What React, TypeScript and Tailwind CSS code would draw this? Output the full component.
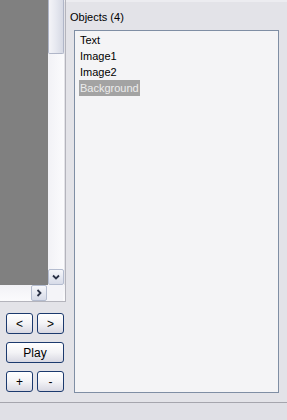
import React from "react";

const objects = ["Text", "Image1", "Image2", "Background"];

const XpButton = ({ label, wide }: { label: string; wide?: boolean }) => (
  <button
    className={`${wide ? "w-[58px]" : "w-[27px]"} h-[21px] rounded-[3px] border border-[#1c3a6e] bg-gradient-to-b from-[#ffffff] via-[#f3f3f6] to-[#d8d8e2] text-[12px] leading-none text-black flex items-center justify-center`}
  >
    {label}
  </button>
);

const ArrowBox = ({ dir }: { dir: "down" | "right" }) => (
  <div className="w-[16px] h-[16px] rounded-[2px] border border-[#b4bccf] bg-gradient-to-b from-[#f6f7fb] to-[#d7dbe8] flex items-center justify-center">
    <svg width="8" height="8" viewBox="0 0 8 8">
      {dir === "down" ? (
        <path d="M1 2.5 L4 5.5 L7 2.5" stroke="#2b3247" strokeWidth="1.8" fill="none" />
      ) : (
        <path d="M2.5 1 L5.5 4 L2.5 7" stroke="#2b3247" strokeWidth="1.8" fill="none" />
      )}
    </svg>
  </div>
);

export default function App() {
  return (
    <div
      className="w-[287px] h-[420px] bg-[#e3e3e8] flex flex-col overflow-hidden"
      style={{ fontFamily: '"Liberation Sans", Arial, sans-serif' }}
    >
      <div className="flex flex-1 border-t-[2px] border-[#ececf0]">
        {/* left: canvas + controls */}
        <div className="w-[66px] flex flex-col">
          <div className="flex flex-col -mt-[2px] border-b border-r border-[#b4b4bc]">
            <div className="flex h-[285px]">
              <div className="w-[48px] bg-[#808080]" />
              <div className="w-[16px] bg-gradient-to-r from-[#f2f2f6] to-[#fbfbfd] flex flex-col justify-between">
                <div className="h-[54px] rounded-b-[2px] border border-t-0 border-[#b0b6c8] bg-gradient-to-r from-[#f4f4f8] via-[#e6e8f0] to-[#d6d9e4]" />
                <ArrowBox dir="down" />
              </div>
            </div>
            <div className="flex h-[16px] bg-gradient-to-b from-[#f2f2f6] to-[#fbfbfd]">
              <div className="w-[31px]" />
              <ArrowBox dir="right" />
              <div className="w-[16px] bg-[#f4f4f8]" />
            </div>
          </div>
          <div className="flex flex-col gap-[8px] pl-[6px] pt-[11px]">
            <div className="flex gap-[4px]">
              <XpButton label="<" />
              <XpButton label=">" />
            </div>
            <XpButton label="Play" wide />
            <div className="flex gap-[4px]">
              <XpButton label="+" />
              <XpButton label="-" />
            </div>
          </div>
        </div>

        {/* right: objects list */}
        <div className="flex-1 flex flex-col pl-[4px] pr-[8px] pb-[9px]">
          <div className="text-[11px] text-black pt-[9px] h-[28px] leading-[13px]">Objects (4)</div>
          <div className="ml-[4px] flex-1 border border-[#7f8ea4] bg-[#f4f4f6] pt-[1px]">
            {objects.map((o, i) => (
              <div key={i} className="h-[16px] flex items-center pl-[4px]">
                <span
                  className={`text-[11px] leading-[16px] px-[1px] ${
                    o === "Background" ? "bg-[#a3a3a3] text-[#ececec]" : "text-black"
                  }`}
                >
                  {o}
                </span>
              </div>
            ))}
          </div>
        </div>
      </div>
      <div className="h-[18px] border-t border-[#a5a5ad] bg-[#e0e0e6]" />
    </div>
  );
}
